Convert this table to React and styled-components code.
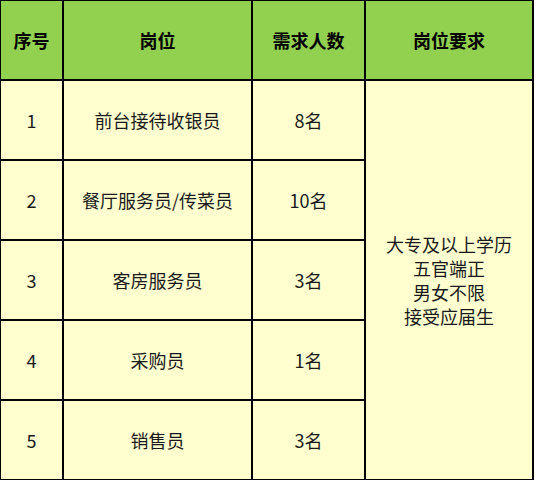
import React from "react";
import styled, { createGlobalStyle } from "styled-components";

const Global = createGlobalStyle`
  html, body { margin: 0; padding: 0; background: #ffffff; }
  body { font-family: "Noto Sans CJK SC", "Noto Sans", sans-serif; }
`;

const Table = styled.div`
  display: grid;
  grid-template-columns: 61px 187px 111px 166px;
  grid-template-rows: 78px repeat(5, 78px);
  gap: 2px;
  background: #000;
  padding: 1px 2px 1px 1px;
  width: max-content;
`;

const Cell = styled.div`
  display: flex;
  flex-direction: column;
  align-items: center;
  justify-content: center;
  text-align: center;
  font-size: 18px;
  line-height: 24px;
  background: ${(p) => (p.$head ? "#92d050" : "#ffffd0")};
  color: ${(p) => (p.$head ? "#000" : "#1a1a1a")};
  font-weight: ${(p) => (p.$head ? 700 : 400)};
`;

const Span = styled(Cell)`
  grid-column: 4;
  grid-row: 2 / 7;
`;

const Line = styled.div`
  height: 24px;
`;

const rows = [
  ["1", "前台接待收银员", "8名"],
  ["2", "餐厅服务员/传菜员", "10名"],
  ["3", "客房服务员", "3名"],
  ["4", "采购员", "1名"],
  ["5", "销售员", "3名"],
];

export default function App() {
  return (
    <>
      <Global />
      <Table>
        <Cell $head>序号</Cell>
        <Cell $head>岗位</Cell>
        <Cell $head>需求人数</Cell>
        <Cell $head>岗位要求</Cell>
        {rows.map((r, i) => (
          <React.Fragment key={i}>
            <Cell style={{ gridRow: i + 2, gridColumn: 1 }}>{r[0]}</Cell>
            <Cell style={{ gridRow: i + 2, gridColumn: 2 }}>{r[1]}</Cell>
            <Cell style={{ gridRow: i + 2, gridColumn: 3 }}>{r[2]}</Cell>
          </React.Fragment>
        ))}
        <Span>
          <Line>大专及以上学历</Line>
          <Line>五官端正</Line>
          <Line>男女不限</Line>
          <Line>接受应届生</Line>
        </Span>
      </Table>
    </>
  );
}
